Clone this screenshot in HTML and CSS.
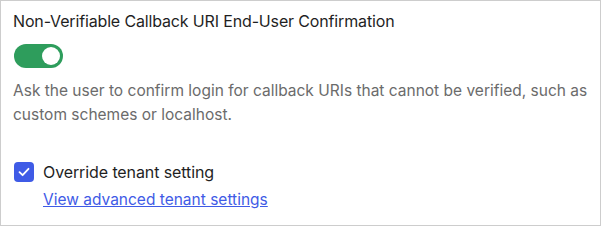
FILE: index.html
```html
<!DOCTYPE html>
<html lang="en">

<head>
    <meta charset="UTF-8">
    <meta name="viewport" content="width=device-width, initial-scale=1.0">
    <title>Callback URI Confirmation</title>
    <link rel="stylesheet" href="styles.css">
</head>

<body>
    <div class="panel">
        <h3 class="title">Non-Verifiable Callback URI End-User Confirmation</h3>

        <button class="toggle toggle-on" role="switch" aria-checked="true">
            <span class="knob"></span>
        </button>

        <p class="desc">Ask the user to confirm login for callback URIs that cannot be verified, such as custom schemes or localhost.</p>

        <label class="check-row">
            <span class="check-box">
                <svg width="14" height="14" viewBox="0 0 14 14">
                    <path d="M2.5 7.2 L5.6 10.2 L11.5 3.8" fill="none" stroke="#fff" stroke-width="1.8" stroke-linecap="round" stroke-linejoin="round"/>
                </svg>
            </span>
            <span class="check-label">Override tenant setting</span>
        </label>
        <a class="link" href="#">View advanced tenant settings</a>
    </div>
</body>

</html>
```

FILE: styles.css
```css
* {
    font-family: Inter, "Noto Sans", sans-serif;
    box-sizing: border-box;
}

:root {
    --color-border: #cdcdcd;
    --color-text: #1f1f1f;
    --color-muted: #6b6b6b;
    --color-green: #2e9d5c;
    --color-blue: #3f5be6;
}

body {
    margin: 0;
    background-color: #fff;
}

.panel {
    width: 601px;
    height: 226px;
    border: 1px solid var(--color-border);
    padding: 8px 12px;
    display: flex;
    flex-direction: column;
    align-items: flex-start;
}

.title {
    margin: 0;
    font-size: 16px;
    line-height: 24px;
    font-weight: 400;
    letter-spacing: -0.15px;
    color: var(--color-text);
}

.toggle {
    margin-top: 11px;
    margin-left: 1px;
    width: 49px;
    height: 24px;
    border: 0;
    border-radius: 12px;
    padding: 3px;
    background-color: var(--color-green);
    display: flex;
    justify-content: flex-end;
    align-items: center;
}

.knob {
    width: 18px;
    height: 18px;
    border-radius: 50%;
    background-color: #fff;
}

.desc {
    margin: 11px 0 0;
    font-size: 15.5px;
    line-height: 24px;
    color: var(--color-muted);
}

.check-row {
    margin-top: 33px;
    display: flex;
    align-items: center;
    gap: 9px;
}

.check-box {
    width: 20px;
    height: 20px;
    margin-left: 1px;
    border-radius: 4px;
    background-color: var(--color-blue);
    display: flex;
    align-items: center;
    justify-content: center;
}

.check-label {
    font-size: 16px;
    line-height: 24px;
    letter-spacing: -0.1px;
    color: var(--color-text);
}

.link {
    margin-top: 4px;
    margin-left: 30px;
    font-size: 15.5px;
    line-height: 24px;
    color: var(--color-blue);
    text-decoration: underline;
}
```
